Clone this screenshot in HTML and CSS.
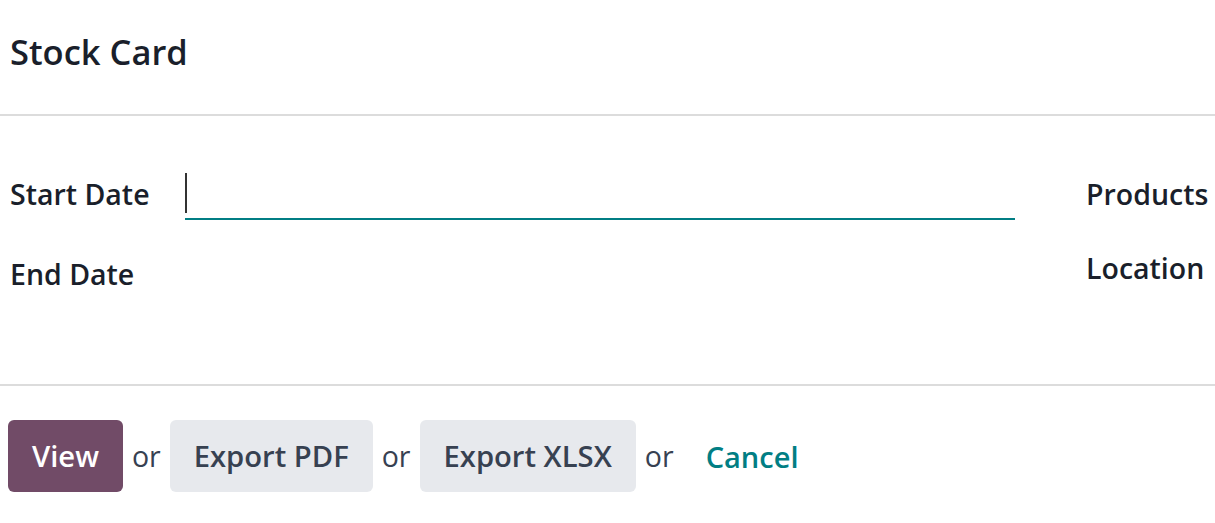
FILE: index.html
```html
<!DOCTYPE html>
<html>
<head>
<meta charset="utf-8">
<link rel="stylesheet" href="styles.css">
</head>
<body>
<div class="dialog">
  <header class="head">
    <h4 class="title">Stock Card</h4>
  </header>
  <main class="body">
    <div class="group">
      <div class="col left">
        <div class="row">
          <label class="label">Start Date</label>
          <div class="field"><span class="caret"></span></div>
        </div>
        <div class="row row2">
          <label class="label">End Date</label>
        </div>
      </div>
      <div class="col right">
        <div class="row"><label class="label">Products</label></div>
        <div class="row row2r"><label class="label">Location</label></div>
      </div>
    </div>
  </main>
  <footer class="foot">
    <button class="btn primary">View</button>
    <span class="or">or</span>
    <button class="btn secondary">Export PDF</button>
    <span class="or">or</span>
    <button class="btn secondary">Export XLSX</button>
    <span class="or">or</span>
    <a class="link">Cancel</a>
  </footer>
</div>
</body>
</html>
```
FILE: styles.css
```css
html, body {
  margin: 0;
  padding: 0;
  background: #fff;
  font-family: "Open Sans", "Noto Sans", sans-serif;
  color: #1a1f2b;
}
.dialog {
  width: 1215px;
}
.head {
  height: 114px;
  border-bottom: 2px solid #dcdcdc;
  padding-left: 10px;
  box-sizing: content-box;
}
.title {
  margin: 0;
  padding-top: 30px;
  font-size: 34.5px;
  line-height: 44px;
  font-weight: 600;
}
.body {
  height: 268px;
  border-bottom: 2px solid #dcdcdc;
}
.group {
  display: flex;
  padding-top: 56px;
}
.col.left {
  width: 1086px;
  flex-shrink: 0;
}
.col.right {
  flex-shrink: 0;
}
.row {
  display: flex;
  align-items: flex-start;
  height: 48px;
}
.row2 {
  margin-top: 32px;
}
.row2r {
  margin-top: 26px;
}
.label {
  font-size: 28.5px;
  font-weight: 600;
  line-height: 44px;
  padding-left: 10px;
  width: 185px;
  box-sizing: border-box;
  white-space: nowrap;
}
.right .label {
  padding-left: 0;
}
.field {
  width: 830px;
  height: 46px;
  border-bottom: 2px solid #017e84;
  position: relative;
}
.caret {
  position: absolute;
  left: 0;
  top: 1px;
  width: 2px;
  height: 40px;
  background: #333;
}
.foot {
  display: flex;
  align-items: center;
  padding: 34px 0 0 8px;
}
.btn {
  font-family: inherit;
  font-size: 29.2px;
  font-weight: 600;
  border: 0;
  border-radius: 6px;
  height: 72px;
  padding: 0 24px;
}
.primary {
  background: #714b67;
  color: #fff;
}
.secondary {
  background: #e7e9ed;
  color: #374151;
}
.or {
  font-size: 28.5px;
  color: #374151;
  margin: 0 9px;
}
.link {
  font-size: 29px;
  font-weight: 600;
  color: #017e84;
  margin-left: 23px;
}
```
